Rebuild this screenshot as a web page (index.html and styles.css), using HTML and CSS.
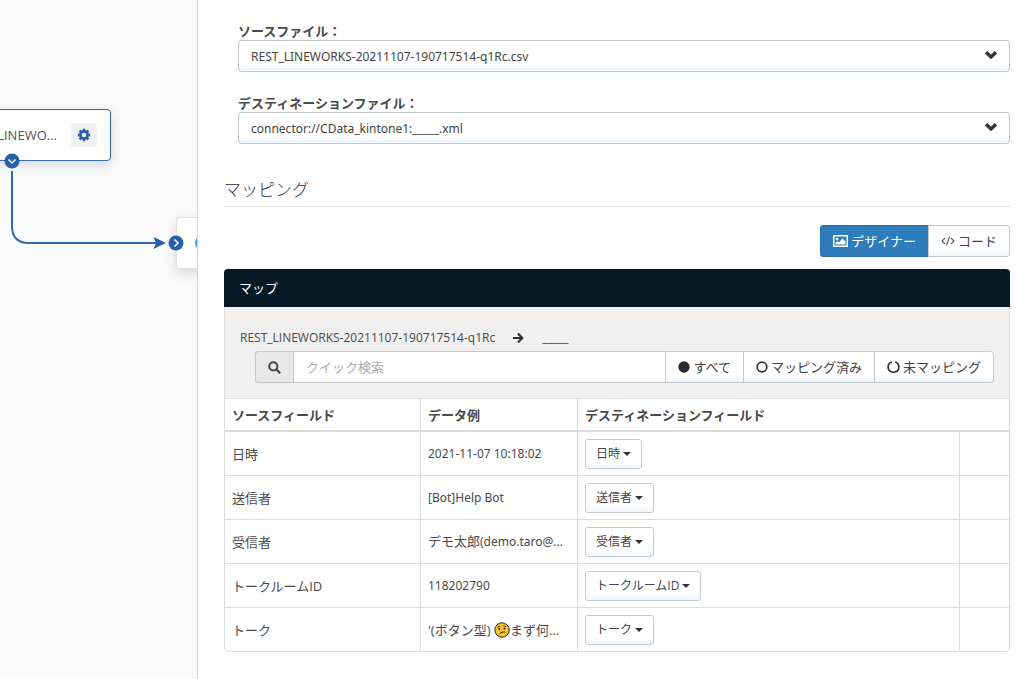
FILE: index.html
```html
<!DOCTYPE html>
<html lang="ja">
<head>
<meta charset="utf-8">
<meta name="viewport" content="width=device-width, initial-scale=1">
<title>マッピング</title>
<link rel="stylesheet" href="styles.css">
</head>
<body>
<div class="layout">
  <section class="canvas" aria-label="フロー">
    <div class="node node-source">
      <span class="node-name">LINEWO...</span>
      <button class="node-settings" type="button" aria-label="設定">
        <svg width="14" height="14" viewBox="0 0 14 14"><circle cx="7" cy="7" r="3.6" fill="none" stroke="#2760a6" stroke-width="2.6"/><path d="M7 .8v2M7 11.2v2M.8 7h2M11.2 7h2M2.6 2.6 4 4M10 10l1.4 1.4M2.6 11.4 4 10M10 4l1.4-1.4" stroke="#2760a6" stroke-width="2.6"/></svg>
      </button>
    </div>
    <div class="node node-target"><span class="node-logo"></span></div>
    <svg class="connector" width="190" height="110" viewBox="0 0 190 110">
      <path d="M12 21v55q0 17 17 17h130" fill="none" stroke="#2a6ab0" stroke-width="2"/>
      <path d="M153.500 87 166 93l-12.500 6 2.500-6z" fill="#2760a6"/>
      <circle cx="12" cy="11" r="7.500" fill="#2760a6"/>
      <path d="m8.500 9.500 3.500 3.500 3.500-3.500" fill="none" stroke="#fff" stroke-width="1.500"/>
      <circle cx="176" cy="93" r="7.500" fill="#2760a6"/>
      <path d="m174.500 89.500 3.500 3.500-3.500 3.500" fill="none" stroke="#fff" stroke-width="1.500"/>
    </svg>
  </section>

  <main class="panel">
    <form class="files">
      <div class="field">
        <label for="source">ソースファイル：</label>
        <div class="select-box">
          <select id="source"><option>REST_LINEWORKS-20211107-190717514-q1Rc.csv</option></select>
          <svg class="chevron" width="14" height="10" viewBox="0 0 14 10"><path d="m2 2.300 5 4.700 5-4.700" fill="none" stroke="#333" stroke-width="3.400"/></svg>
        </div>
      </div>
      <div class="field">
        <label for="destination">デスティネーションファイル：</label>
        <div class="select-box">
          <select id="destination"><option>connector://CData_kintone1:_____.xml</option></select>
          <svg class="chevron" width="14" height="10" viewBox="0 0 14 10"><path d="m2 2.300 5 4.700 5-4.700" fill="none" stroke="#333" stroke-width="3.400"/></svg>
        </div>
      </div>
    </form>

    <h2 class="title">マッピング</h2>

    <div class="view-switch">
      <button class="btn btn-primary" type="button">
        <svg width="15" height="12" viewBox="0 0 15 12"><rect x=".75" y=".75" width="13.500" height="10.500" fill="none" stroke="#fff" stroke-width="1.500"/><circle cx="4" cy="4" r="1.300" fill="#fff"/><path d="M2.500 9.500V8l2-2 1.500 1.500L9.500 3.500l3 3v3z" fill="#fff"/></svg>デザイナー
      </button>
      <button class="btn" type="button">
        <svg class="code-icon" width="14" height="12" viewBox="0 0 14 12"><path d="M4 3 1 6l3 3M10 3l3 3-3 3M8.500 1.500l-3 9" fill="none" stroke="#555" stroke-width="1.100"/></svg>コード
      </button>
    </div>

    <section class="map">
      <h3 class="map-title">マップ</h3>
      <div class="map-tools">
        <div class="map-path">
          <span>REST_LINEWORKS-20211107-190717514-q1Rc</span>
          <svg width="11" height="12" viewBox="0 0 11 12"><path d="M0 6h9M5 1.500 9.300 6 5 10.500" fill="none" stroke="#333" stroke-width="2.200"/></svg>
          <span>_____</span>
        </div>
        <div class="search">
          <label class="search-icon" for="quick" aria-label="検索"><svg width="13" height="13" viewBox="0 0 13 13"><circle cx="5.300" cy="5.300" r="4.100" fill="none" stroke="#444" stroke-width="2"/><path d="m8.300 8.300 3.900 3.900" stroke="#444" stroke-width="2.200"/></svg></label>
          <input id="quick" class="search-input" type="text" placeholder="クイック検索">
          <button class="btn" type="button"><svg width="12" height="12" viewBox="0 0 12 12"><circle cx="6" cy="6" r="5.700" fill="#2c2c33"/></svg>すべて</button>
          <button class="btn" type="button"><svg width="12" height="12" viewBox="0 0 12 12"><circle cx="6" cy="6" r="4.800" fill="none" stroke="#333" stroke-width="1.700"/></svg>マッピング済み</button>
          <button class="btn" type="button"><svg width="13" height="12" viewBox="0 0 13 12"><path d="M4.900 1a5.200 5.200 0 0 0 0 10M8.100 1a5.200 5.200 0 0 1 0 10M4.900 11q1.600.5 3.200 0" fill="none" stroke="#333" stroke-width="1.700"/></svg>未マッピング</button>
        </div>
      </div>
      <table class="grid">
        <colgroup><col class="col-source"><col class="col-sample"><col><col class="col-action"></colgroup>
        <thead>
          <tr><th>ソースフィールド</th><th>データ例</th><th colspan="2">デスティネーションフィールド</th></tr>
        </thead>
        <tbody>
          <tr><td>日時</td><td class="latin">2021-11-07 10:18:02</td><td><button class="btn pick" type="button">日時<span class="caret"></span></button></td><td></td></tr>
          <tr><td>送信者</td><td class="latin">[Bot]Help Bot</td><td><button class="btn pick" type="button">送信者<span class="caret"></span></button></td><td></td></tr>
          <tr><td>受信者</td><td>デモ太郎<span class="latin">(demo.taro@...</span></td><td><button class="btn pick" type="button">受信者<span class="caret"></span></button></td><td></td></tr>
          <tr><td>トークルームID</td><td class="latin">118202790</td><td><button class="btn pick" type="button">トークルームID<span class="caret"></span></button></td><td></td></tr>
          <tr><td>トーク</td><td>'(ボタン型) <svg class="emoji" width="16" height="16" viewBox="0 0 16 16" role="img" aria-label="困った顔"><circle cx="8" cy="8" r="7.200" fill="#fdc52b" stroke="#2b2412"/><circle cx="5.300" cy="7" r="1" fill="#2b2412"/><circle cx="10.500" cy="6.500" r="1" fill="#2b2412"/><path d="m3.500 5.200 2.500-1M9.500 3.800l2.700.8M5.500 11.800q2.500-2.300 5.500-1.800" fill="none" stroke="#2b2412"/></svg>まず何...</td><td><button class="btn pick" type="button">トーク<span class="caret"></span></button></td><td></td></tr>
        </tbody>
      </table>
    </section>
  </main>
</div>
</body>
</html>
```
FILE: styles.css
```css
* { box-sizing: border-box; }

body {
  margin: 0;
  background: #fff;
  color: #4a4a4a;
  font: 13px/18px "Open Sans", "Noto Sans CJK JP", sans-serif;
}

button, input, select { font: inherit; color: #444; }

.layout {
  display: flex;
  min-height: 100vh;
}

/* Flow canvas */
.canvas {
  position: relative;
  flex: 0 0 198px;
  overflow: hidden;
  border-right: 1px solid #d6d6d6;
  background: #fafafa;
}

.node {
  position: absolute;
  display: flex;
  align-items: center;
  height: 52px;
  border-radius: 4px;
  background: #fff;
  box-shadow: 0 4px 12px rgba(40, 40, 80, .16);
}

.node-source {
  top: 109px;
  left: -80px;
  width: 191px;
  justify-content: flex-end;
  gap: 14px;
  padding-right: 13px;
  border: 1px solid #2f6db3;
  white-space: nowrap;
}

.node-name { color: #555; }

.node-settings {
  display: flex;
  align-items: center;
  justify-content: center;
  width: 26px;
  height: 24px;
  padding: 0;
  border: 0;
  border-radius: 2px;
  background: #f0f0f0;
}

.node-target {
  top: 217px;
  left: 176px;
  width: 190px;
  padding-left: 18px;
  border: 1px solid #e0e0e0;
}

.node-logo {
  width: 24px;
  height: 14px;
  border-radius: 7px;
  background: #3d9be0;
}

.connector {
  position: absolute;
  top: 150px;
  left: 0;
}

/* Settings panel */
.panel {
  flex: 1;
  min-width: 0;
  padding: 22px 22px 24px 26px;
}

.files {
  display: grid;
  gap: 22px;
  padding-left: 14px;
}

.field label {
  display: block;
  font-weight: 600;
}

.select-box { position: relative; }

.select-box select {
  display: block;
  width: 100%;
  height: 32px;
  padding: 1px 36px 0 12px;
  appearance: none;
  border: 1px solid #c3c9cf;
  border-radius: 3px;
  background: linear-gradient(#fff 82%, #e9f3fb);
  font-family: "Noto Sans", "Noto Sans CJK JP", sans-serif;
  font-size: 12px;
}

.chevron {
  position: absolute;
  top: 10px;
  right: 12px;
  pointer-events: none;
}

.title {
  margin: 34px 0 18px;
  padding-bottom: 4px;
  border-bottom: 1px solid #dedede;
  color: #333;
  font-size: 17px;
  line-height: 24px;
  font-weight: 300;
}

.view-switch {
  display: flex;
  justify-content: flex-end;
  margin-bottom: 12px;
}

.btn {
  display: inline-flex;
  align-items: center;
  justify-content: center;
  gap: 3px;
  height: 32px;
  padding: 0 12px;
  border: 1px solid #c3ccd4;
  background: linear-gradient(#fff 78%, #edf5fb);
  white-space: nowrap;
}

.btn + .btn { margin-left: -1px; }

.btn:last-child { border-radius: 0 3px 3px 0; }

.btn-primary {
  border-color: #2b6da6;
  border-radius: 3px 0 0 3px;
  background: #2f7cba;
  color: #fff;
}

/* Map */
.map {
  overflow: hidden;
  border-radius: 4px;
}

.map-title {
  margin: 0;
  padding: 10px 15px;
  background: #061924;
  color: #fff;
  font-size: 13px;
  font-weight: 400;
}

.map-tools {
  padding: 22px 15px 15px;
  border: solid #dcdcdc;
  border-width: 0 1px;
  background: #f0f0f0;
}

.map-path {
  display: flex;
  align-items: center;
  gap: 18px;
  margin-bottom: 4px;
  font-size: 12px;
}

.search {
  display: flex;
  padding-left: 15px;
}

.search-icon {
  display: flex;
  align-items: center;
  justify-content: center;
  width: 38px;
  border: 1px solid #c8c8c8;
  border-right: 0;
  border-radius: 3px 0 0 3px;
  background: #e8e8e8;
}

.search-input {
  flex: 1;
  min-width: 0;
  height: 32px;
  padding: 0 12px;
  border: 1px solid #c8c8c8;
  border-right: 0;
  border-radius: 0;
  background: #fff;
}

.search-input::placeholder { color: #aaa; }

.grid {
  width: 100%;
  table-layout: fixed;
  border-collapse: separate;
  border-spacing: 0;
  border: 1px solid #dcdcdc;
  border-radius: 0 0 4px 4px;
}

.col-source { width: 196px; }
.col-sample { width: 157px; }
.col-action { width: 49px; }

.grid th, .grid td {
  padding: 0 7px;
  border-right: 1px solid #dcdcdc;
  text-align: left;
  white-space: nowrap;
}

.grid th {
  height: 33px;
  border-bottom: 2px solid #dcdcdc;
  font-weight: 600;
}

.grid td {
  height: 44px;
  border-bottom: 1px solid #dcdcdc;
}

.grid tr > :last-child { border-right: 0; }

.grid tbody tr:last-child td {
  height: 43px;
  border-bottom: 0;
}

.grid .latin {
  font-family: "Noto Sans", "Noto Sans CJK JP", sans-serif;
  font-size: 12px;
}

.emoji { vertical-align: -3px; }

.grid .pick {
  display: flex;
  gap: 3px;
  height: 30px;
  padding: 1px 10px 0;
  border-radius: 3px;
  font-size: 12px;
}

.caret {
  border: 4px solid transparent;
  border-top-color: #333;
  border-bottom: 0;
}
```
